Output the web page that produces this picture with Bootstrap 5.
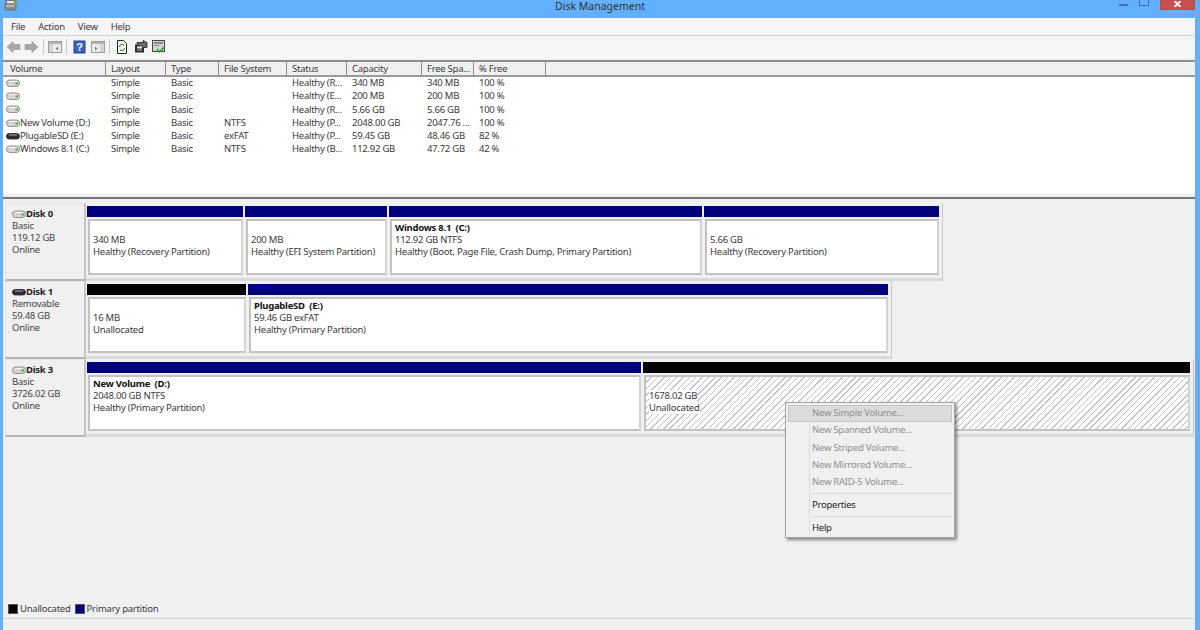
<!DOCTYPE html>
<html lang="en">
<head>
<meta charset="UTF-8">
<title>Disk Management</title>
<link href="https://cdn.jsdelivr.net/npm/bootstrap@5.3.0/dist/css/bootstrap.min.css" rel="stylesheet">
<style>
  html, body { height: 630px; overflow: hidden; }
  body { background: #62b0fd; font: 9.5px/12px "Noto Sans", "Liberation Sans", sans-serif; letter-spacing: -.25px; color: #3a3a3a; }
  .win-title { height: 18px; position: relative; }
  .win-title .ttl { font-size: 10.5px; line-height: 13px; color: #333; text-align: center; width: 100%; letter-spacing: 0; }
  .win-btns { gap: 11px; margin-right: 5px; height: 10px; }
  .btn-min { width: 9px; height: 2px; background: #4a6bb8; margin-top: 4px; }
  .btn-max { width: 10px; height: 6px; border: 1px solid #4a6bb8; border-top: 0; }
  .btn-close-red { width: 35px; height: 10px; background: #c75050; border: 1px solid #c24a4a; display: flex; justify-content: center; }
  .app-ico { margin-left: 4px; }
  .client { margin: 0 5px 0 3px; height: 600px; background: #f0f0f0; position: relative; }
  .menubar { height: 18px; background: #f5f5f5; border-bottom: 1px solid #d4d4d4; padding-left: 8px; gap: 13px; line-height: 17px; }
  .toolbar { height: 24px; background: #f5f5f5; padding: 0 0 2px 3px; gap: 3px; border-bottom: 1px solid #ededed; }
  .tool-sep { width: 1px; height: 15px; background: #c8c8c8; margin: 0 1px; }
  .tl-help { margin-left: 2px; }
  .tl-act { margin-left: 1px; }
  .tl-ref { margin-left: 2px; }
  .tl-prop { margin-left: 3px; }
  .tl-chk { margin-left: 1px; }
  .list-pane { height: 133px; background: #fff; border-top: 2px solid #8c8c8c; }
  .vol-head { display: flex; height: 15px; background: #f0f0f0; border-bottom: 2px solid #9a9a9a; line-height: 13px; margin-bottom: -1px; }
  .vol-head > div { border-right: 1px solid #8d8d8d; padding-left: 5px; white-space: nowrap; overflow: hidden; }
  .vol-head > .c1 { padding-left: 7px; }
  .vol-head > div:last-child { border-right: 0; }
  .c1 { width: 103px; } .c2 { width: 60px; } .c3 { width: 53px; } .c4 { width: 68px; }
  .c5 { width: 60px; } .c6 { width: 75px; } .c7 { width: 52px; } .c8 { width: 72px; }
  .vol-row { display: flex; height: 13.3px; line-height: 13.3px; white-space: nowrap; }
  .vol-row > div { padding-left: 5px; overflow: hidden; }
  .vol-row > .c1 { padding-left: 3px; display: flex; align-items: center; }
  .split { height: 6px; background: #f0f0f0; border-top: 1px solid #f8f8f8; border-bottom: 2px solid #777; }
  .disks { padding: 4px 0 0 2px; }
  .disk-row { display: flex; height: 78px; }
  .disk-lbl { width: 81px; flex: none; background: #f0f0f0; border: 1px dotted #dcdcdc; border-right: 2px solid #c4c4c4; border-bottom: 2px solid #b4b4b4; padding: 4px 0 0 6px; color: #444; }
  .disk-lbl b { color: #222; display: flex; align-items: center; }
  .disk-parts { display: grid; column-gap: 2px; padding: 3px 3px 3px 1px; border-right: 1px solid #c9c9c9; border-bottom: 3px solid #dadada; }
  .d0 { grid-template-columns: 156px 142px 313px 235px; }
  .d1 { grid-template-columns: 159px 640px; }
  .d2 { grid-template-columns: 554px 547px; }
  .part-bar { height: 11px; background: #00007f; margin-bottom: 2px; }
  .part-bar.unalloc { background: #000; }
  .part-box { height: 56px; background: #fff; border: 2px solid #c2c2c2; margin-left: 1px; border-right-color: #d4d4d4; padding: 1px 0 0 3px; white-space: nowrap; overflow: hidden; }
  .part-box b { display: block; height: 12px; color: #111; }
  .hatch { background: repeating-linear-gradient(135deg, #fff 0, #fff 3.5px, #c4c4c4 3.5px, #c4c4c4 4.5px); }
  .hatch span { background: #fff; display: table; }
  .legend { position: absolute; left: 5px; bottom: 3px; gap: 2px; line-height: 13px; }
  .lg-box { width: 10px; height: 10px; border: 1px solid #555; display: inline-block; }
  .lg-primary { background: #00007f; margin-left: 2px; }
  .lg-none { background: #000; }
  .ctx { position: absolute; left: 782px; top: 384px; width: 170px; height: 136px; background: #f0f0f0; border: 1px solid #a5a5a5; box-shadow: 2px 2px 3px rgba(0,0,0,.45); padding: 2px; }
  .ctx-item { height: 17.3px; line-height: 15px; padding-left: 24px; color: #222; }
  .ctx-item.off { color: #8f8f8f; }
  .ctx-item.hot { background: #dcdcdc; border: 1px solid #c4c4c4; line-height: 13px; padding-left: 23px; }
  .ctx-sep { height: 1px; background: #d9d9d9; margin: 2px 0 2.4px 23px; }
  .ctx-gutter { position: absolute; left: 23px; top: 2px; bottom: 2px; width: 1px; background: #dcdcdc; }
  .bottom-strip { height: 12px; margin: 0 5px 0 3px; background: #f0f0f0; border-top: 1px solid #d4d4d4; }
</style>
</head>
<body>
<svg width="0" height="0" class="position-absolute">
  <symbol id="hd" viewBox="0 0 14 10">
    <rect x=".5" y="2" width="13" height="6.500" rx="3" fill="#d4d4d4" stroke="#7d7d7d" stroke-width=".8"/>
    <path d="M3 3.500h8" stroke="#f4f4f4"/>
    <rect x="9.500" y="4.500" width="2.500" height="2" fill="#4fb53a"/>
  </symbol>
  <symbol id="sd" viewBox="0 0 14 10">
    <rect x=".5" y="2.500" width="13" height="5.500" rx="2.700" fill="#2e2e2e" stroke="#222" stroke-width=".8"/>
    <path d="M3 4h8" stroke="#aaa"/>
  </symbol>
</svg>

<div class="win-title d-flex justify-content-between">
  <svg class="app-ico" width="14" height="11" viewBox="0 0 14 11"><path d="M2 0h9v3l1 1v5l-1 1H2L1 9V4l1-1z" fill="#8b8b8b" stroke="#5a5a5a" stroke-width=".7"/><path d="M3 1h7v2H3z" fill="#e6e6e6"/><path d="M2 6h9" stroke="#ddd"/><rect x="11" y="1" width="2.500" height="3" fill="#6fb04f"/></svg>
  <div class="ttl position-absolute top-0 start-0">Disk Management</div>
  <div class="win-btns d-flex">
    <div class="btn-min"></div><div class="btn-max"></div>
    <div class="btn-close-red"><svg width="9" height="6" viewBox="0 0 9 6"><path d="M1.500 0 4.500 3 7.500 0M1.500 6 4.500 3 7.500 6" fill="none" stroke="#fff" stroke-width="1.800"/></svg></div>
  </div>
</div>

<div class="client">
  <div class="menubar d-flex"><span>File</span><span>Action</span><span>View</span><span>Help</span></div>
  <div class="toolbar d-flex align-items-center">
    <svg width="15" height="12" viewBox="0 0 15 12"><path d="M1 6 7 .5v3h7v5H7v3z" fill="#a8a8a8" stroke="#949494" stroke-width=".6"/></svg>
    <svg width="15" height="12" viewBox="0 0 15 12"><path d="M14 6 8 .5v3H1v5h7v3z" fill="#a8a8a8" stroke="#949494" stroke-width=".6"/></svg>
    <div class="tool-sep"></div>
    <svg width="14" height="12" viewBox="0 0 14 12"><rect x=".5" y=".5" width="13" height="11" fill="#ececec" stroke="#9c9c9c"/><rect x="1" y="1" width="12" height="2" fill="#b5b5b5"/><rect x="1" y="3" width="4" height="8" fill="#d4d4d4"/><path d="M10 5.500v4L7.500 7.500z" fill="#4d9f5d"/></svg>
    <div class="tool-sep"></div>
    <svg class="tl-help" width="14" height="14" viewBox="0 0 14 14"><rect x="1" y="1" width="11" height="12" fill="#3a5fc0" stroke="#27468f"/><text x="6.500" y="11" font-size="11" font-weight="700" fill="#fff" text-anchor="middle" font-family="Liberation Sans, sans-serif">?</text></svg>
    <svg class="tl-act" width="14" height="12" viewBox="0 0 14 12"><rect x=".5" y=".5" width="13" height="11" fill="#ececec" stroke="#9c9c9c"/><rect x="1" y="1" width="12" height="2" fill="#b5b5b5"/><rect x="9" y="3" width="4" height="8" fill="#d4d4d4"/><path d="M4 5.500v4l2.500-2z" fill="#4d9f5d"/></svg>
    <div class="tool-sep"></div>
    <svg class="tl-ref" width="12" height="14" viewBox="0 0 12 14"><path d="M1.500.5h6l3 3v10h-9z" fill="#fff" stroke="#222"/><path d="M3.500 7a2.500 2.500 0 0 1 4.500-1.500M8.500 8A2.500 2.500 0 0 1 4 9.500" fill="none" stroke="#3f9e3a" stroke-width="1.200"/></svg>
    <svg class="tl-prop" width="14" height="13" viewBox="0 0 14 13"><rect x="1" y="4.500" width="9" height="8" fill="#2b2b2b"/><path d="M3 4.500V2.500h6V.5l4 2v5h-3" fill="#666" stroke="#222" stroke-width=".8"/><rect x="3" y="6.500" width="5" height="2" fill="#eee"/><rect x="3" y="9.500" width="5" height="1" fill="#bbb"/></svg>
    <svg class="tl-chk" width="14" height="14" viewBox="0 0 14 14"><rect x=".5" y=".5" width="12" height="11" fill="#d2d6cc" stroke="#444"/><rect x="2" y="2" width="9" height="2" fill="#888"/><rect x="2" y="5" width="5" height="1" fill="#888"/><path d="M5 9l2.500 3 5-5" fill="none" stroke="#3f9e3a" stroke-width="1.800"/></svg>
  </div>

  <div class="list-pane">
    <div class="vol-head">
      <div class="c1">Volume</div><div class="c2">Layout</div><div class="c3">Type</div><div class="c4">File System</div><div class="c5">Status</div><div class="c6">Capacity</div><div class="c7">Free Spa...</div><div class="c8">% Free</div><div class="flex-grow-1"></div>
    </div>
    <div class="vol-rows">
      <div class="vol-row"><div class="c1"><svg width="14" height="10"><use href="#hd"/></svg></div><div class="c2">Simple</div><div class="c3">Basic</div><div class="c4"></div><div class="c5">Healthy (R...</div><div class="c6">340 MB</div><div class="c7">340 MB</div><div class="c8">100 %</div></div>
      <div class="vol-row"><div class="c1"><svg width="14" height="10"><use href="#hd"/></svg></div><div class="c2">Simple</div><div class="c3">Basic</div><div class="c4"></div><div class="c5">Healthy (E...</div><div class="c6">200 MB</div><div class="c7">200 MB</div><div class="c8">100 %</div></div>
      <div class="vol-row"><div class="c1"><svg width="14" height="10"><use href="#hd"/></svg></div><div class="c2">Simple</div><div class="c3">Basic</div><div class="c4"></div><div class="c5">Healthy (R...</div><div class="c6">5.66 GB</div><div class="c7">5.66 GB</div><div class="c8">100 %</div></div>
      <div class="vol-row"><div class="c1"><svg width="14" height="10"><use href="#hd"/></svg>New Volume (D:)</div><div class="c2">Simple</div><div class="c3">Basic</div><div class="c4">NTFS</div><div class="c5">Healthy (P...</div><div class="c6">2048.00 GB</div><div class="c7">2047.76 ...</div><div class="c8">100 %</div></div>
      <div class="vol-row"><div class="c1"><svg width="14" height="10"><use href="#sd"/></svg>PlugableSD (E:)</div><div class="c2">Simple</div><div class="c3">Basic</div><div class="c4">exFAT</div><div class="c5">Healthy (P...</div><div class="c6">59.45 GB</div><div class="c7">48.46 GB</div><div class="c8">82 %</div></div>
      <div class="vol-row"><div class="c1"><svg width="14" height="10"><use href="#hd"/></svg>Windows 8.1 (C:)</div><div class="c2">Simple</div><div class="c3">Basic</div><div class="c4">NTFS</div><div class="c5">Healthy (B...</div><div class="c6">112.92 GB</div><div class="c7">47.72 GB</div><div class="c8">42 %</div></div>
    </div>
  </div>
  <div class="split"></div>

  <div class="disks">
    <div class="disk-row">
      <div class="disk-lbl"><b><svg width="14" height="10"><use href="#hd"/></svg>Disk 0</b>Basic<br>119.12 GB<br>Online</div>
      <div class="disk-parts d0">
        <div><div class="part-bar"></div><div class="part-box"><b></b>340 MB<br>Healthy (Recovery Partition)</div></div>
        <div><div class="part-bar"></div><div class="part-box"><b></b>200 MB<br>Healthy (EFI System Partition)</div></div>
        <div><div class="part-bar"></div><div class="part-box"><b>Windows 8.1&nbsp; (C:)</b>112.92 GB NTFS<br>Healthy (Boot, Page File, Crash Dump, Primary Partition)</div></div>
        <div><div class="part-bar"></div><div class="part-box"><b></b>5.66 GB<br>Healthy (Recovery Partition)</div></div>
      </div>
    </div>
    <div class="disk-row">
      <div class="disk-lbl"><b><svg width="14" height="10"><use href="#sd"/></svg>Disk 1</b>Removable<br>59.48 GB<br>Online</div>
      <div class="disk-parts d1">
        <div><div class="part-bar unalloc"></div><div class="part-box"><b></b>16 MB<br>Unallocated</div></div>
        <div><div class="part-bar"></div><div class="part-box"><b>PlugableSD&nbsp; (E:)</b>59.46 GB exFAT<br>Healthy (Primary Partition)</div></div>
      </div>
    </div>
    <div class="disk-row">
      <div class="disk-lbl"><b><svg width="14" height="10"><use href="#hd"/></svg>Disk 3</b>Basic<br>3726.02 GB<br>Online</div>
      <div class="disk-parts d2">
        <div><div class="part-bar"></div><div class="part-box"><b>New Volume&nbsp; (D:)</b>2048.00 GB NTFS<br>Healthy (Primary Partition)</div></div>
        <div><div class="part-bar unalloc"></div><div class="part-box hatch"><b></b><span>1678.02 GB</span><span>Unallocated</span></div></div>
      </div>
    </div>
  </div>

  <div class="ctx">
    <div class="ctx-gutter"></div>
    <div class="ctx-item off hot">New Simple Volume...</div>
    <div class="ctx-item off">New Spanned Volume...</div>
    <div class="ctx-item off">New Striped Volume...</div>
    <div class="ctx-item off">New Mirrored Volume...</div>
    <div class="ctx-item off">New RAID-5 Volume...</div>
    <div class="ctx-sep"></div>
    <div class="ctx-item">Properties</div>
    <div class="ctx-sep"></div>
    <div class="ctx-item">Help</div>
  </div>

  <div class="legend d-flex align-items-center">
    <span class="lg-box lg-none"></span><span>Unallocated</span>
    <span class="lg-box lg-primary"></span><span>Primary partition</span>
  </div>
</div>
<div class="bottom-strip"></div>

<script src="https://cdn.jsdelivr.net/npm/bootstrap@5.3.0/dist/js/bootstrap.bundle.min.js"></script>
</body>
</html>
